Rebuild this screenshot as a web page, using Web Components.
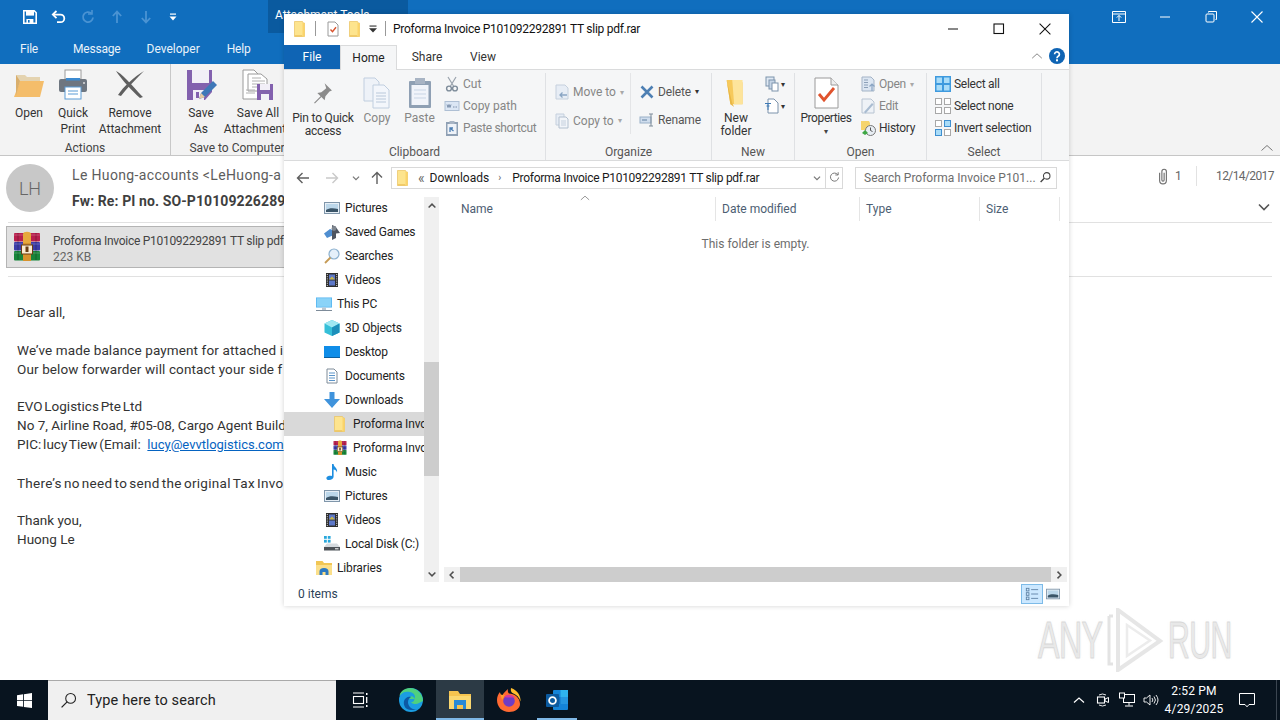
<!DOCTYPE html>
<html lang="en">
<head>
<meta charset="utf-8">
<title>Proforma Invoice</title>
<style>
  html, body { margin: 0; height: 100%; overflow: hidden; background: #fff; }
  body { display: flex; flex-direction: column; width: 1280px; height: 720px; position: relative;
         font-family: Roboto, "Noto Sans", sans-serif; font-size: 12px; color: #333; }
</style>
</head>
<body>
<outlook-window></outlook-window>
<win-taskbar></win-taskbar>
<explorer-window></explorer-window>
<any-run></any-run>

<script>
const folderY = '<path d="M2.500 .5h8l.8 1.500h1.200V15.500H2.500z" fill="#fde48e" stroke="#e9c25f" stroke-width=".7"/><path d="M10.500 2h2v13.500h-2z" fill="#fbd46a"/><path d="M2.500 15.500h8l-.5-1.200H3z" fill="#edc35c"/>';
const rar = '<rect x="3" y="2" width="26" height="8.500" rx="1" fill="#b81f4d"/><rect x="3" y="11" width="26" height="8.500" rx="1" fill="#3b3ca8"/><rect x="3" y="20" width="26" height="9.500" rx="1" fill="#17853a"/><path d="M7 2v27M25 2v27" stroke="#000" stroke-opacity=".25"/><path d="M3 4h26M3 13h26M3 22h26" stroke="#fff" stroke-opacity=".22"/><path d="M12 3c0-3 8-3 8 0v9h-8z" fill="#e7a93c"/><rect x="12" y="12" width="8" height="18" fill="#d7922c"/><rect x="10.500" y="14" width="11" height="9" fill="#f9ecd0" stroke="#6a3d12"/><rect x="14.500" y="15.500" width="3" height="5.500" fill="#6a3d12"/>';
const pic = '<rect x=".5" y="2.500" width="15" height="11" fill="#e7eff6" stroke="#8096aa"/><rect x="2" y="4" width="12" height="8" fill="#bcd7ea"/><path d="M2 10c3-2 7-2 12-1v3H2z" fill="#3b5568"/>';
const vid = '<rect x="2" y="1" width="12" height="14" fill="#2e2e2e"/><rect x="5" y="2.500" width="6" height="5" fill="#5d78c9"/><rect x="5" y="8.500" width="6" height="5" fill="#5d78c9"/><path d="M5 7.500l3-3 3 3z" fill="#c8b54a"/><path d="M3.300 2v12M12.700 2v12" stroke="#ddd" stroke-dasharray="1 1.200"/>';

// one drawing per icon: "viewBox|svg markup"
const ICONS = {
  save: '0 0 16 16|<path d="M1.800 1.800h10.400l2 2v10.400H1.800z" fill="none" stroke="#fff" stroke-width="1.600"/><rect x="4" y="2" width="8" height="4.600" fill="#fff"/><rect x="4.400" y="10" width="7" height="4" fill="#fff"/><rect x="6" y="11" width="1.600" height="2.600" fill="#106ebe"/>',
  undo: '0 0 16 16|<path d="M5.500 2L1.800 5.600l3.700 3.600" fill="none" stroke="#fff" stroke-width="1.800"/><path d="M2 5.600h7.500a3.800 3.800 0 0 1 0 7.600H6" fill="none" stroke="#fff" stroke-width="1.800"/>',
  redo: '0 0 16 16|<path d="M11.500 4.500a5 5 0 1 0 1.500 4" fill="none" stroke="#4a93d3" stroke-width="1.800"/><path d="M12 1v4H8" fill="none" stroke="#4a93d3" stroke-width="1.600"/>',
  upd: '0 0 16 16|<path d="M8 14V3M3.800 7L8 2.600 12.200 7" fill="none" stroke="#4a93d3" stroke-width="1.800"/>',
  downd: '0 0 16 16|<path d="M8 2v11M3.800 9L8 13.400 12.200 9" fill="none" stroke="#4a93d3" stroke-width="1.800"/>',
  custom: '0 0 10 10|<rect x="2" y="1.500" width="6" height="1.200" fill="#fff"/><path d="M1.500 4.500h7L5 8.500z" fill="#fff"/>',
  customd: '0 0 10 10|<rect x="1.500" y="1.500" width="7" height="1.100" fill="#333"/><path d="M1 4.200h8L5 8.500z" fill="#333"/>',
  ribbonmode: '0 0 16 16|<path d="M1.500 2.500h13v11h-13zM1.500 5h13" fill="none" stroke="#fff"/><path d="M8 12V6.500M5.800 8.600L8 6.400l2.200 2.200" fill="none" stroke="#fff"/>',
  minw: '0 0 16 16|<path d="M3 8h10" stroke="#fff"/>',
  restorew: '0 0 16 16|<path d="M5.500 3.500V2.500h8v8h-1" fill="none" stroke="#fff"/><rect x="3" y="5" width="8" height="8" rx="1" fill="none" stroke="#fff"/>',
  closew: '0 0 16 16|<path d="M2.500 2.500l11 11M13.500 2.500l-11 11" stroke="#fff" stroke-width="1.100"/>',
  open: '0 0 32 32|<path d="M3 6h9l2 2h13v6H3z" fill="#e4d3b0"/><path d="M7 12h24l-4 16H1z" fill="#f4bd6a"/><path d="M3 6v20l4-14" fill="#d9ae6c"/>',
  print: '0 0 32 32|<rect x="8" y="1" width="16" height="9" fill="#fff" stroke="#9b9b9b"/><rect x="2" y="10" width="28" height="13" rx="2" fill="#6e7680"/><rect x="8" y="18" width="16" height="12" fill="#fff" stroke="#5b9bd5"/><path d="M11 22h10M11 25h10" stroke="#5b9bd5" stroke-width="1.200"/><rect x="9" y="9" width="14" height="2.500" fill="#3d8bd1"/><circle cx="27" cy="14" r="1" fill="#ddd"/>',
  xgray: '0 0 32 32|<path d="M2 2c7 3 19 18 27 26l-3 1C18 22 8 11 2 2z" fill="#5f5f5f"/><path d="M30 2C21 7 9 18 4 26l3 1C13 19 23 9 30 2z" fill="#5f5f5f"/>',
  saveas: '0 0 32 32|<path d="M2 1h25v22l-7 8H2z" fill="#8361ae"/><rect x="7" y="1" width="17" height="13" fill="#f2eff7"/><rect x="8" y="21" width="11" height="10" fill="#f2eff7"/><rect x="11" y="23" width="3" height="6" fill="#8361ae"/><path d="M14 30l2-6 12-12 4 4-12 12z" fill="#3f78b8"/><path d="M14 30l2-6 4 4z" fill="#e7c9a1"/>',
  saveall: '0 0 32 32|<path d="M1 1h11l5 5v24H1z" fill="#fff" stroke="#9a9a9a"/><path d="M6 5h13l6 5v12H6z" fill="#fff" stroke="#9a9a9a"/><path d="M10 9h9M10 12h13M10 15h13M10 18h5M4 21h9M4 24h9" stroke="#b0b0b0"/><rect x="15" y="15" width="16" height="16" fill="#8361ae"/><rect x="18" y="15" width="10" height="6" fill="#f2eff7"/><rect x="19" y="25" width="8" height="6" fill="#f2eff7"/>',
  clip: '0 0 16 16|<path d="M5 5v7a3 3 0 0 0 6 0V4a2 2 0 0 0-4 0v7.500a1 1 0 0 0 2 0V5" fill="none" stroke="#6e6e6e" stroke-width="1"/>',
  chevd: '0 0 16 16|<path d="M3 5.500l5 5 5-5" fill="none" stroke="#555" stroke-width="1.600"/>',
  chevu: '0 0 16 16|<path d="M2.500 10.500L8 5.500l5.500 5" fill="none" stroke="#777" stroke-width="1"/>',
  rar: '0 0 32 32|' + rar,
  folder: '0 0 16 16|' + folderY,
  props: '0 0 16 16|<path d="M3 1h7l3 3v11H3z" fill="#fff" stroke="#9a9a9a"/><path d="M5.500 8.500l2 2.200 3.500-4.400" fill="none" stroke="#d9512c" stroke-width="1.400"/>',
  minb: '0 0 16 16|<path d="M3 8h10" stroke="#111" stroke-width="1"/>',
  maxb: '0 0 16 16|<rect x="3" y="3" width="9.500" height="9.500" fill="none" stroke="#111" stroke-width="1.100"/>',
  closeb: '0 0 16 16|<path d="M2.600 2.600l10.800 10.800M13.400 2.600L2.600 13.400" stroke="#111" stroke-width="1.050"/>',
  help: '0 0 16 16|<circle cx="8" cy="8" r="8" fill="#0f64b4"/><path d="M5.600 6.200a2.400 2.400 0 1 1 3.600 2.100c-.8.500-1.200.9-1.200 1.900" fill="none" stroke="#fff" stroke-width="1.700"/><rect x="7" y="11.300" width="2" height="2" fill="#fff"/>',
  pin: '0 0 32 32|<path d="M18 4l9 9-3 1-5 6-1 5-4-4-8 8-1-1 8-8-4-4 5-1 6-5z" fill="#8b8b8b"/>',
  copy: '0 0 32 32|<path d="M3 1h11l4 4v19H3z" fill="#eef2f8" stroke="#c0cedf"/><path d="M12 8h11l5 5v18H12z" fill="#f3f6fb" stroke="#c0cedf"/><path d="M15 16h10M15 19h10M15 22h10M15 25h10" stroke="#b9c8da"/>',
  paste: '0 0 32 32|<rect x="5" y="4" width="22" height="27" rx="1" fill="#8fa0b4"/><rect x="7.500" y="8" width="17" height="20" fill="#f1f4fa"/><rect x="11" y="1" width="10" height="6" fill="#a8b4c4"/><path d="M10 13h12M10 17h12M10 21h12" stroke="#c9d5e5"/>',
  cut: '0 0 16 16|<path d="M4 1l5.500 9M12 1L6.500 10" stroke="#9aa3ad" stroke-width="1.200"/><circle cx="5" cy="12.500" r="2.400" fill="none" stroke="#7d8b99" stroke-width="1.400"/><circle cx="11" cy="12.500" r="2.400" fill="none" stroke="#7d8b99" stroke-width="1.400"/>',
  copypath: '0 0 16 16|<rect x="1" y="3.500" width="14" height="9" fill="#dbe6f4" stroke="#aebfd4"/><path d="M3 6.500l1 3 1-3 1 3 1-3M9 9h1.500M11.500 9H13" fill="none" stroke="#7087a3" stroke-width=".9"/>',
  pastesc: '0 0 16 16|<rect x="2" y="2" width="12" height="14" fill="#8fa0b4"/><rect x="3.500" y="4" width="9" height="10" fill="#eef2f8"/><rect x="5.500" y="1" width="5" height="3" fill="#a8b4c4"/><path d="M6 12V8h3M6.500 8.500L9.500 11" stroke="#4b7db3" stroke-width="1.300" fill="none"/>',
  moveto: '0 0 16 16|<path d="M2 1h9l3 3v11H2z" fill="#e7edf5" stroke="#c5d0dd"/><path d="M13 11H6M8.500 8.500L6 11l2.500 2.500" fill="none" stroke="#8aa5c3" stroke-width="1.300"/>',
  copyto: '0 0 16 16|<path d="M2 1h8v11H2z" fill="#e7edf5" stroke="#c5d0dd"/><path d="M5 4h7l2 2v9H5z" fill="#f2f5f9" stroke="#b3c0cf"/><path d="M7 8h5M7 10h5M7 12h5" stroke="#c5d0dd"/>',
  del: '0 0 16 16|<path d="M2.500 2.500l11 11M13.500 2.500l-11 11" stroke="#4d7fb3" stroke-width="2.600"/>',
  rename: '0 0 16 16|<rect x="1" y="5" width="11" height="6" fill="#cfdded" stroke="#9ab0c8"/><path d="M3 8h5" stroke="#5f7f9f"/><path d="M12 2v12M10 2h4M10 14h4" stroke="#7d8b99"/>',
  newfolder: '0 0 32 32|<path d="M6 2h15l2 3v23H10z" fill="#f6c95c"/><path d="M12 2h11v26H14z" fill="#fde49b"/><path d="M6 2l4 26 4 3-2-4z" fill="#e8b645"/>',
  newitem: '0 0 16 16|<rect x="2" y="1" width="8" height="9" fill="#dfe8f3" stroke="#7d93ac"/><rect x="5" y="4" width="6" height="9" fill="#c6d5e6" stroke="#7d93ac"/><rect x="8" y="7" width="6" height="8" fill="#fff" stroke="#7d93ac"/>',
  easy: '0 0 16 16|<path d="M4 1h6l4 4v10H4z" fill="#fff" stroke="#7d93ac"/><path d="M1 5.500h6M2.500 8h3M4 5.500V12" stroke="#3e7ab5" stroke-width="1" fill="none"/>',
  propbig: '0 0 32 32|<path d="M5 1h16l7 7v23H5z" fill="#fff" stroke="#9a9a9a"/><path d="M21 1v7h7" fill="#eee" stroke="#9a9a9a"/><path d="M9 17l5 6 10-12" fill="none" stroke="#e0532d" stroke-width="2.800"/>',
  openfile: '0 0 16 16|<path d="M2 1h9l3 3v11H2z" fill="#dce6f2" stroke="#a3b3c6"/><path d="M4 4h4M4 6.500h4M4 9h4M4 11.500h4" stroke="#8ca0b8"/><path d="M12 15V8M9.500 10.500L12 8l2.500 2.500" fill="none" stroke="#8aa5c3" stroke-width="1.200"/>',
  edit: '0 0 16 16|<path d="M2 1h9l3 3v11H2z" fill="#eef2f7" stroke="#b8c4d2"/><path d="M4 14l8-9 1.500 1.500-8 9z" fill="#a9bcd1"/>',
  history: '0 0 16 16|<path d="M1 1h8l1 2v7H1z" fill="#f5d46c"/><circle cx="10.500" cy="10.500" r="5" fill="#e8eef4" stroke="#777"/><path d="M10.500 7.500v3l2 1" fill="none" stroke="#555"/><path d="M2 13l3-3 3 3-3 2z" fill="#3ea845"/>',
  selall: '0 0 16 16|<rect width="16" height="16" fill="#3e9ade"/><rect x="1.500" y="1.500" width="5.500" height="5.500" fill="#a9dcf8"/><rect x="9" y="1.500" width="5.500" height="5.500" fill="#a9dcf8"/><rect x="1.500" y="9" width="5.500" height="5.500" fill="#a9dcf8"/><rect x="9" y="9" width="5.500" height="5.500" fill="#a9dcf8"/>',
  selnone: '0 0 16 16|<g fill="#fff" stroke="#a8a8a8"><rect x=".5" y=".5" width="6" height="6"/><rect x="9.500" y=".5" width="6" height="6"/><rect x=".5" y="9.500" width="6" height="6"/><rect x="9.500" y="9.500" width="6" height="6"/></g>',
  selinv: '0 0 16 16|<g stroke="#3e8fd0"><rect x=".5" y="9.500" width="6" height="6" fill="#a9dcf8"/><rect x="9.500" y=".5" width="6" height="6" fill="#a9dcf8"/><rect x=".5" y=".5" width="6" height="6" fill="#fff" stroke="#a8a8a8"/><rect x="9.500" y="9.500" width="6" height="6" fill="#fff" stroke="#a8a8a8"/></g>',
  back: '0 0 16 16|<path d="M14 8H2.500M7.500 3L2.500 8l5 5" fill="none" stroke="#5f5f5f" stroke-width="1.400"/>',
  fwd: '0 0 16 16|<path d="M2 8h11.500M8.500 3l5 5-5 5" fill="none" stroke="#c9c9c9" stroke-width="1.400"/>',
  mini: '0 0 16 16|<path d="M4.500 6.500L8 10l3.500-3.500" fill="none" stroke="#777" stroke-width="1.400"/>',
  up: '0 0 16 16|<path d="M8 14V2.500M3 7.500l5-5 5 5" fill="none" stroke="#5f5f5f" stroke-width="1.400"/>',
  refresh: '0 0 16 16|<path d="M12 4.500A5 5 0 1 0 13 8" fill="none" stroke="#6b6b6b" stroke-width="1.100"/><path d="M12.500 1.500v3.400H9" fill="none" stroke="#6b6b6b" stroke-width="1.100"/>',
  searchg: '0 0 16 16|<circle cx="9.500" cy="6" r="4" fill="none" stroke="#444" stroke-width="1.300"/><path d="M6.500 9L2 13.500" stroke="#444" stroke-width="1.700"/>',
  scrollu: '0 0 16 16|<path d="M3.500 10L8 5.500l4.500 4.500" fill="none" stroke="#505050" stroke-width="2"/>',
  scrolld: '0 0 16 16|<path d="M3.500 6L8 10.500 12.500 6" fill="none" stroke="#505050" stroke-width="2"/>',
  scrolll: '0 0 16 16|<path d="M10 3.500L5.500 8l4.500 4.500" fill="none" stroke="#505050" stroke-width="2"/>',
  scrollr: '0 0 16 16|<path d="M6 3.500L10.500 8 6 12.500" fill="none" stroke="#505050" stroke-width="2"/>',
  pictures: '0 0 16 16|' + pic,
  games: '0 0 16 16|<path d="M0 9.500L6 5l2.500 1v5.500L3 14z" fill="#4f8ed0"/><path d="M8 1l3.500 1.500L16 9l-4 .5V14l-4 2z" fill="#4e5560"/><circle cx="10" cy="4.500" r="2.400" fill="#7f8790"/>',
  searches: '0 0 16 16|<circle cx="10" cy="6" r="5" fill="#e5f0fa" stroke="#8bb0cf" stroke-width="1.200"/><path d="M6.500 9.500L1 15" stroke="#c59b55" stroke-width="1.800"/>',
  videos: '0 0 16 16|' + vid,
  pc: '0 0 16 16|<rect x="0" y="1.500" width="16" height="10" fill="#4db0ef"/><rect x=".7" y="2.200" width="14.600" height="8.600" fill="#8ad3f8"/><rect x="0" y="14" width="16" height="1" fill="#7d8b99"/><rect x="6" y="11.500" width="4" height="2.500" fill="#bcc7d1"/>',
  objects: '0 0 16 16|<path d="M8 0l7.500 3.500v9L8 16 .5 12.500v-9z" fill="#35bfd8"/><path d="M8 7.500L.5 3.500 8 0l7.500 3.500z" fill="#9fe8f2"/><path d="M8 7.500V16l7.500-3.500v-9z" fill="#1c8fba"/>',
  desktop: '0 0 16 16|<rect x="0" y="2" width="16" height="11.500" fill="#0f8de8"/><rect x="0" y="13" width="16" height="1" fill="#0b5e9e"/>',
  docs: '0 0 16 16|<path d="M3 1h7l3 3v11H3z" fill="#fff" stroke="#7f8c99"/><path d="M5 5h6M5 7.500h6M5 10h6M5 12.500h6" stroke="#5a94c9"/>',
  downloads: '0 0 16 16|<path d="M5.500 0h5v7H16l-8 9-8-9h5.500z" fill="#3f93dc"/>',
  music: '0 0 16 16|<path d="M8 0h1.600c.3 3.500 4.400 3.800 3.400 8.500-.5-1.800-2-2.700-3.400-2.900V12.500c0 2-2 3.500-4.600 3.500-2 0-3-1.200-2.500-2.600C3 12 6 11.400 8 12z" fill="#1e8ee0"/>',
  disk: '0 0 16 16|<rect x="0" y="0" width="2.800" height="2.800" fill="#2aa8dc"/><rect x="3.800" y="0" width="2.800" height="2.800" fill="#2aa8dc"/><rect x="0" y="3.800" width="2.800" height="2.800" fill="#2aa8dc"/><rect x="3.800" y="3.800" width="2.800" height="2.800" fill="#2aa8dc"/><path d="M3 7.500h10l3 3.500H0z" fill="#d5dadf"/><rect x="0" y="11" width="16" height="3.500" fill="#4d5258"/><rect x="11" y="12.300" width="3.500" height="1" fill="#fff"/>',
  libs: '0 0 16 16|<path d="M0 1h6.500L8 3h8v12H0z" fill="#f1c654"/><path d="M0 5h16v10H0z" fill="#fbdf8a"/><path d="M3.500 15v-3.500a4.500 3.500 0 0 1 9 0V15h-3v-3h-3v3z" fill="#2b79c2"/>',
  vdetails: '0 0 16 16|<g fill="none" stroke="#5b7fa3"><rect x="1.500" y="1.500" width="3" height="3"/><rect x="1.500" y="6.500" width="3" height="3"/><rect x="1.500" y="11.500" width="3" height="3"/><path d="M7 3h8M7 8h8M7 13h8"/></g>',
  windows: '0 0 16 16|<path d="M0 2.300l6.500-.9v6.200H0zM7.400 1.300L16 0v7.600H7.400zM0 8.500h6.500v6.200L0 13.800zM7.400 8.500H16V16l-8.600-1.200z" fill="#fff"/>',
  tsearch: '0 0 16 16|<circle cx="10" cy="6" r="4.600" fill="none" stroke="#222" stroke-width="1"/><path d="M6.700 9.300L1.500 14.500" stroke="#222" stroke-width="1.200"/>',
  taskview: '0 0 16 16|<path d="M1 1h11M1 15h11" stroke="#fff" stroke-width="1.100"/><rect x="1.500" y="4.500" width="10" height="7" fill="none" stroke="#fff" stroke-width="1.100"/><rect x="14" y="1" width="1.500" height="2" fill="#fff"/><path d="M14.700 5v6" stroke="#fff" stroke-width="1.300"/><rect x="14" y="13" width="1.500" height="2" fill="#fff"/>',
  edge: '0 0 24 24|<circle cx="12" cy="12" r="12" fill="#1b9de2"/><path d="M24 13C24 6 18 0 11 0 5 0 1 4 .5 8 3 4 7 3 11 4c5 1 6 5 4 7h-5c0-3 4-4 5-1 1 2 0 4-3 4.500 3 2 6 2 8 .5z" fill="#4fd07f"/><path d="M12 22c-5 0-8-4-7-9 1-3 4-5 7-4-4 2-4 8 0 11 2 1.500 5 2 8 .5-2 1-5 1.500-8 1.500z" fill="#0c59a4"/>',
  explorer: '0 0 24 24|<path d="M1 3h9l2 3h11v15H1z" fill="#f6c44f"/><rect x="1" y="8" width="22" height="13" fill="#fbd870"/><path d="M6 12h12v9h-3v-3H9v3H6z" fill="#2a8ad4"/><rect x="9" y="17" width="6" height="4" fill="#f6c44f"/>',
  firefox: '0 0 24 24|<path d="M12 24C5 24 0 19 0 12c0-3 1-6 3-8 0 2 1 3 2 4 1-3 4-5 6-7-.5 2 0 3.500 1 4.500 5 0 11 4 11 10.500 0 4.500-5 8-11 8z" fill="#ff6a32"/><path d="M14 0c-.5 2.500 0 4 1.500 5 4 1.500 7 4.500 8 8.500.5-5-2.500-11-9.500-13.500z" fill="#ffbd2e"/><path d="M3 5c1 2 3 2.500 5 2L5 12z" fill="#ffa02e"/><circle cx="12" cy="13" r="5.800" fill="#6f3cc4"/><path d="M7 9c3-3 8-3 11 1-4-1-7 0-11-1z" fill="#d6379f"/>',
  outlook: '0 0 24 24|<rect x="8" y="2" width="15" height="20" rx="1" fill="#1484d8"/><rect x="15.500" y="2" width="7.500" height="7" fill="#2fb4ee"/><rect x="8" y="9" width="7.500" height="7" fill="#0f6cbd"/><rect x="15.500" y="9" width="7.500" height="7" fill="#2596e0"/><rect x="1" y="6" width="13" height="13" rx="1" fill="#0b5a9f"/><circle cx="7.500" cy="12.500" r="3.400" fill="none" stroke="#fff" stroke-width="1.800"/>',
  caret: '0 0 16 16|<path d="M3 10.500L8 6l5 4.500" fill="none" stroke="#fff" stroke-width="1.200"/>',
  meet: '0 0 16 16|<path d="M4 3a7 7 0 0 1 7 0M4 13a7 7 0 0 0 7 0" fill="none" stroke="#fff" stroke-width=".9"/><rect x="2.500" y="5" width="7" height="6" fill="none" stroke="#fff" stroke-width="1.100"/><path d="M10 7l3.500-1.500v5L10 9z" fill="none" stroke="#fff" stroke-width="1"/>',
  net: '0 0 16 16|<rect x="4.500" y="2.500" width="11" height="8" fill="none" stroke="#fff"/><rect x=".5" y="1" width="5" height="5" fill="#08141f" stroke="#fff"/><path d="M10 10.500v3M6 14h8" stroke="#fff"/>',
  sound: '0 0 16 16|<path d="M1 6h2.500L7 3v10L3.500 10H1z" fill="none" stroke="#fff" stroke-width=".9"/><path d="M9 6a3 3 0 0 1 0 4M11 4.500a5.500 5.500 0 0 1 0 7M13 3a8 8 0 0 1 0 10" fill="none" stroke="#fff" stroke-width=".9"/>',
  notif: '0 0 16 16|<path d="M.5 1.500h15v11H10L8 14.800 6 12.500H.5z" fill="none" stroke="#fff" stroke-width="1"/>',
  logo: '0 0 60 64|<path d="M5 8v48h4M5 8h4" fill="none" stroke="#e3e3e3" stroke-width="3"/><path d="M14 2v60L56 33z" fill="none" stroke="#e6e6e6" stroke-width="4"/><path d="M23 17v31l23-15.500z" fill="none" stroke="#ececec" stroke-width="2.500"/>'
};

// <ui-icon name size>: inline svg out of the table above
class UiIcon extends HTMLElement {
  connectedCallback() {
    const [vb, body] = (ICONS[this.getAttribute('name')] || '0 0 16 16|').split('|');
    const w = this.getAttribute('size') || 16;
    const h = this.getAttribute('h') || w;
    this.attachShadow({ mode: 'open' }).innerHTML = `
      <style>:host { display: inline-flex; flex: none; line-height: 0; }</style>
      <svg width="${w}" height="${h}" viewBox="${vb}">${body}</svg>`;
  }
}
customElements.define('ui-icon', UiIcon);

// big ribbon button: icon on top, label under it
class RibbonBig extends HTMLElement {
  connectedCallback() {
    const w = this.getAttribute('w'), icon = this.getAttribute('icon');
    const size = this.getAttribute('size') || 32, lh = this.getAttribute('lh') || 13;
    const top = this.getAttribute('top') || 39;
    this.attachShadow({ mode: 'open' }).innerHTML = `
      <style>
        :host { display: flex; flex-direction: column; align-items: center; flex: none; width: ${w}px;
                text-align: center; line-height: ${lh}px; }
        .i { height: ${top}px; flex: none; display: flex; align-items: center; justify-content: center; }
      </style>
      <div class="i"><ui-icon name="${icon}" size="${size}"></ui-icon></div>
      <slot></slot>`;
  }
}
customElements.define('ribbon-big', RibbonBig);

// small ribbon row: 16px icon then label
class RibbonSmall extends HTMLElement {
  connectedCallback() {
    const h = this.getAttribute('h') || 22;
    const drop = this.getAttribute('drop');
    this.attachShadow({ mode: 'open' }).innerHTML = `
      <style>
        :host { display: flex; align-items: center; gap: 3px; height: ${h}px; white-space: nowrap; }
        .c { font-size: 8px; color: ${drop === 'dark' ? '#333' : '#a8a8a8'}; margin-left: 1px; }
        .c.t { margin-left: -2px; }
      </style>
      <ui-icon name="${this.getAttribute('icon')}" size="16"></ui-icon>
      <slot></slot>${drop !== null ? `<span class="c ${this.textContent.trim() ? '' : 't'}">▾</span>` : ''}`;
  }
}
customElements.define('ribbon-small', RibbonSmall);

// a ribbon group: content on top, caption at the bottom, separator on the right
class RibbonGroup extends HTMLElement {
  connectedCallback() {
    const w = this.getAttribute('w');
    this.attachShadow({ mode: 'open' }).innerHTML = `
      <style>
        :host { display: flex; flex-direction: column; flex: none; width: ${w}px; height: 100%;
                box-sizing: border-box; border-right: 1px solid var(--sep, #dfe1e4); }
        .c { flex: 1; display: flex; min-height: 0; }
        .l { height: var(--cap-h, 15px); line-height: 15px; text-align: center; color: var(--cap, #555);
             margin-right: var(--capr, 0); white-space: nowrap; }
      </style>
      <div class="c"><slot></slot></div>
      <div class="l">${this.getAttribute('label')}</div>`;
  }
}
customElements.define('ribbon-group', RibbonGroup);

class NavRow extends HTMLElement {
  connectedCallback() {
    const lvl = +this.getAttribute('lvl');
    this.attachShadow({ mode: 'open' }).innerHTML = `
      <style>
        :host { display: flex; align-items: center; gap: 5px; height: 24px; flex: none; white-space: nowrap;
                padding-left: ${lvl}px; color: #222; overflow: hidden; letter-spacing: -.15px; }
        :host([sel]) { background: #d9d9d9; }
      </style>
      <ui-icon name="${this.getAttribute('icon')}" size="16"></ui-icon>
      <slot></slot>`;
  }
}
customElements.define('nav-row', NavRow);

class OutlookWindow extends HTMLElement {
  constructor() {
    super();
    this.attachShadow({ mode: 'open' }).innerHTML = `
      <style>
        :host { display: flex; flex-direction: column; height: 680px; flex: none; position: relative; overflow: hidden; }
        .top { background: #106ebe; height: 64px; flex: none; color: #fff; display: flex; flex-direction: column; position: relative; }
        .qat { height: 33px; display: flex; align-items: center; }
        .qbtn { width: 29px; display: flex; justify-content: center; }
        .tool { background: #0a5a9f; height: 33px; width: 140px; padding-left: 7px;
                box-sizing: border-box; line-height: 30px; white-space: nowrap; }
        .ctl { margin-left: auto; display: flex; }
        .ctl div { width: 46px; display: flex; justify-content: center; }
        .tabs { height: 31px; display: flex; align-items: center; letter-spacing: -.2px; color: #e9f2fa; }
        .tabs span:nth-child(1) { margin-left: 20px; }
        .tabs span:nth-child(2) { margin-left: 35px; }
        .tabs span:nth-child(3) { margin-left: 26px; letter-spacing: 0; }
        .tabs span:nth-child(4) { margin-left: 27px; }
        .ribbon { height: 92px; flex: none; box-sizing: border-box; background: #f3f3f3; border-bottom: 1px solid #c6c6c6;
                  display: flex; padding-left: 6px; position: relative; --sep: #c8c8c8; --cap: #444; --cap-h: 14px; }
        .ribbon ribbon-big { padding-top: 1px; }
        .collapse { position: absolute; right: 5px; bottom: -1px; }
        .sep { margin-left: 10px; }
        .hdr { display: flex; height: 66px; flex: none; }
        .av { width: 48px; height: 48px; border-radius: 50%; background: #c8c8c8; margin: 8px 18px 0 6px; flex: none;
              display: flex; align-items: center; justify-content: center; font-size: 18px; color: #666; font-weight: 300; }
        .who { flex: 1; padding-top: 9px; white-space: nowrap; }
        .sender { font-size: 14px; line-height: 20px; color: #5d5d5d; letter-spacing: .35px; }
        .subject { font-size: 14px; line-height: 20px; font-weight: 700; color: #3f3f3f; margin-top: 6px; letter-spacing: .1px; }
        .meta { width: 126px; padding: 10px 8px 0 0; box-sizing: border-box; color: #666; flex: none; }
        .m1 { display: flex; align-items: center; height: 20px; }
        .m1 .n { margin-left: 3px; width: 7px; flex: none; }
        .m1 .d { border-left: 1px solid #e2e2e2; height: 20px; margin: 0 19px 0 14px; flex: none; }
        .m1 .date { white-space: nowrap; letter-spacing: -.6px; }
        .m2 { display: flex; justify-content: flex-end; margin-top: 13px; }
        .rule { height: 1px; background: #e1e1e1; margin: 0 8px; flex: none; }
        .att { height: 53px; flex: none; padding: 3px 0 0 6px; box-sizing: border-box; }
        .chip { width: 400px; height: 42px; box-sizing: border-box; background: #e1e1e1; border: 1px solid #b4b4b4;
                display: flex; align-items: center; padding-left: 4px; gap: 10px; }
        .chip div { line-height: 16px; color: #444; white-space: nowrap; padding-top: 3px; letter-spacing: -.28px; }
        .chip small { font-size: 12px; color: #666; display: block; letter-spacing: 0; }
        .body { padding: 26px 0 0 17px; font-size: 13.5px; line-height: 18.85px; color: #333; white-space: nowrap; }
        .wide { letter-spacing: .12px; }
        .tight { word-spacing: -1.500px; }
        .tax { word-spacing: -1.500px; letter-spacing: .3px; }
        a { color: #0563c1; word-spacing: 0; font-size: 13px; margin-left: 3px; }
      </style>
      <div class="top">
        <div class="qat">
          <div class="qbtn" style="margin-left:15px"><ui-icon name="save"></ui-icon></div>
          <div class="qbtn"><ui-icon name="undo"></ui-icon></div>
          <div class="qbtn"><ui-icon name="redo"></ui-icon></div>
          <div class="qbtn"><ui-icon name="upd"></ui-icon></div>
          <div class="qbtn"><ui-icon name="downd"></ui-icon></div>
          <div class="qbtn" style="margin-left:-2px"><ui-icon name="custom" size="10"></ui-icon></div>
          <div class="tool" style="margin-left:81px">Attachment Tools</div>
          <div class="ctl">
            <div><ui-icon name="ribbonmode"></ui-icon></div>
            <div><ui-icon name="minw"></ui-icon></div>
            <div><ui-icon name="restorew"></ui-icon></div>
            <div><ui-icon name="closew"></ui-icon></div>
          </div>
        </div>
        <div class="tabs"><span>File</span><span>Message</span><span>Developer</span><span>Help</span></div>
      </div>
      <div class="ribbon">
        <ribbon-group w="165" label="Actions" style="--capr:6px">
          <ribbon-big w="46" icon="open" lh="16" top="40">Open</ribbon-big>
          <ribbon-big w="42" icon="print" lh="16" top="40">Quick Print</ribbon-big>
          <ribbon-big w="72" icon="xgray" lh="16" top="40">Remove Attachment</ribbon-big>
        </ribbon-group>
        <ribbon-group class="sep" w="112" label="Save to Computer" style="border:0">
          <ribbon-big w="40" icon="saveas" lh="16" top="40">Save As</ribbon-big>
          <ribbon-big w="74" icon="saveall" lh="16" top="40">Save All Attachments</ribbon-big>
        </ribbon-group>
        <ui-icon class="collapse" name="chevu" size="16"></ui-icon>
      </div>
      <div class="hdr">
        <div class="av">LH</div>
        <div class="who">
          <div class="sender">Le Huong-accounts &lt;LeHuong-a</div>
          <div class="subject">Fw: Re: PI no. SO-P10109226289</div>
        </div>
        <div class="meta">
          <div class="m1"><ui-icon name="clip" size="18"></ui-icon><span class="n">1</span><span class="d"></span><span class="date">12/14/2017</span></div>
          <div class="m2"><ui-icon name="chevd"></ui-icon></div>
        </div>
      </div>
      <div class="rule"></div>
      <div class="att">
        <div class="chip"><ui-icon name="rar" size="32"></ui-icon><div>Proforma Invoice P101092292891 TT slip pdf<small>223 KB</small></div></div>
      </div>
      <div class="rule"></div>
      <div class="body">
        Dear all,<br><br>
        <span class="wide">We’ve made balance payment for attached i</span><br>
        <span class="wide">Our below forwarder will contact your side f</span><br><br>
        <span class="tight">EVO Logistics Pte Ltd</span><br>
        No 7, Airline Road, #05-08, Cargo Agent Build<br>
        <span class="tight">PIC: lucy Tiew (Email: &nbsp;</span><a href="#">lucy@evvtlogistics.com</a><br><br>
        <span class="tax">There’s no need to send the original Tax Invo</span><br><br>
        Thank you,<br>
        Huong Le
      </div>`;
  }
}
customElements.define('outlook-window', OutlookWindow);

class ExplorerWindow extends HTMLElement {
  constructor() {
    super();
    this.attachShadow({ mode: 'open' }).innerHTML = `
      <style>
        /* floating window on the desktop, so it keeps its own place */
        :host { position: absolute; left: 284px; top: 14px; width: 785px; height: 592px; background: #fff;
                display: flex; flex-direction: column; box-shadow: 0 0 5px rgba(0,0,0,.18); color: #333; }
        .title { height: 29px; flex: none; display: flex; align-items: center; padding-left: 8px; color: #111; }
        .title .v { width: 1px; height: 15px; background: #999; }
        .long { letter-spacing: -.28px; }
        .ctl { margin-left: auto; display: flex; padding-right: 1px; }
        .ctl div { width: 46px; display: flex; justify-content: center; }
        .tabs { height: 26px; flex: none; display: flex; box-sizing: border-box; position: relative; top: 1px; z-index: 1; }
        .tabs div { line-height: 25px; text-align: center; height: 24px; box-sizing: border-box; margin-top: 1px; }
        .tfile { width: 56px; background: #0f64b4; color: #fff; }
        .thome { width: 57px; background: #f5f6f7; border: 1px solid #dadbdc; border-bottom: 0; height: 25px !important; color: #222; }
        .tshare { width: 60px; color: #333; }
        .tview { width: 52px; color: #333; }
        .tright { margin-left: auto; display: flex; align-items: center; gap: 5px; padding: 0 4px 2px 0; line-height: 0 !important; }
        .ribbon { height: 92px; flex: none; box-sizing: border-box; background: #f5f6f7; border-top: 1px solid #dadbdc;
                  border-bottom: 1px solid #dadbdc; display: flex; padding-top: 3px; }
        .dim { color: #868686; }
        .small { display: flex; flex-direction: column; }
        .org { padding: 5px 0 0 8px; display: flex; }
        .addr { height: 36px; flex: none; display: flex; align-items: center; padding-bottom: 3px; box-sizing: border-box; }
        .nv { display: flex; align-items: center; width: 107px; flex: none; padding-left: 11px; box-sizing: border-box; }
        .path { width: 435px; height: 22px; flex: none; box-sizing: border-box; border: 1px solid #d9d9d9; display: flex; align-items: center;
                padding-left: 3px; color: #1a1a1a; white-space: nowrap; }
        .refresh { width: 17px; height: 22px; box-sizing: border-box; border: 1px solid #d9d9d9; border-left: 0; display: flex; align-items: center; justify-content: center; flex: none; }
        .search { width: 202px; height: 22px; flex: none; box-sizing: border-box; border: 1px solid #d9d9d9; margin-left: 12px; display: flex; align-items: center;
                  padding: 0 4px 0 8px; color: #6d6d6d; white-space: nowrap; justify-content: space-between; }
        .main { flex: 1; display: flex; min-height: 0; }
        .nav { width: 140px; flex: none; overflow: hidden; display: flex; flex-direction: column; }
        .nav-in { margin-top: -1px; display: flex; flex-direction: column; }
        .vs { width: 15px; flex: none; background: #f0f0f0; display: flex; flex-direction: column; align-items: center; }
        .vs .ar { height: 17px; display: flex; align-items: center; }
        .vs .sp { flex: 1; width: 100%; display: flex; flex-direction: column; }
        .vs .th { height: 114px; margin-top: 148px; background: #cdcdcd; }
        .list { flex: 1; display: flex; flex-direction: column; min-width: 0; }
        .cols { display: flex; height: 24px; flex: none; position: relative; color: #4d5e73; }
        .cols div { box-sizing: border-box; border-right: 1px solid #e5e5e5; padding-left: 6px; line-height: 24px; flex: none; }
        .sort { position: absolute; left: 140px; top: -5px; }
        .empty { flex: 1; text-align: center; margin: 16px 2px 0 5px; color: #6d6d6d; }
        .hs { height: 15px; flex: none; margin: 0 2px 0 5px; background: #f0f0f0; display: flex; align-items: center; }
        .hs .th { flex: 1; height: 100%; background: #cdcdcd; }
        .hs .ar { width: 16px; display: flex; justify-content: center; }
        .status { height: 24px; flex: none; display: flex; align-items: center; padding-left: 14px; color: #2b3f58; }
        .views { margin-left: auto; display: flex; padding-right: 8px; align-items: center; gap: 2px; }
        .vbtn { width: 16px; height: 20px; box-sizing: border-box; display: flex; align-items: center; justify-content: center; }
        .vbtn.on { width: 22px; background: #cce8ff; border: 1px solid #7dbbe8; }
      </style>
      <div class="title">
        <ui-icon name="folder" size="16"></ui-icon><span class="v" style="margin:0 9px 0 7px"></span>
        <ui-icon name="props" size="16"></ui-icon>
        <ui-icon name="folder" size="16" style="margin-left:6px"></ui-icon>
        <ui-icon name="customd" size="10" style="margin-left:5px"></ui-icon><span class="v" style="margin:0 7px"></span>
        <span class="long">Proforma Invoice P101092292891 TT slip pdf.rar</span>
        <div class="ctl">
          <div><ui-icon name="minb"></ui-icon></div>
          <div><ui-icon name="maxb"></ui-icon></div>
          <div><ui-icon name="closeb"></ui-icon></div>
        </div>
      </div>
      <div class="tabs">
        <div class="tfile">File</div><div class="thome">Home</div><div class="tshare">Share</div><div class="tview">View</div>
        <div class="tright"><ui-icon name="chevu" size="14"></ui-icon><ui-icon name="help" size="16"></ui-icon></div>
      </div>
      <div class="ribbon">
        <ribbon-group w="262" label="Clipboard">
          <ribbon-big w="72" icon="pin" size="26" style="margin-left:3px;letter-spacing:-.2px">Pin to Quick access</ribbon-big>
          <ribbon-big w="36" icon="copy" class="dim">Copy</ribbon-big>
          <ribbon-big w="47" icon="paste" class="dim" style="margin-left:1px">Paste</ribbon-big>
          <div class="small dim" style="margin-left:1px">
            <ribbon-small icon="cut">Cut</ribbon-small>
            <ribbon-small icon="copypath">Copy path</ribbon-small>
            <ribbon-small icon="pastesc" style="letter-spacing:-.35px">Paste shortcut</ribbon-small>
          </div>
        </ribbon-group>
        <ribbon-group w="166" label="Organize">
          <div class="small org dim">
            <ribbon-small icon="moveto" h="28" drop>Move to</ribbon-small>
            <ribbon-small icon="copyto" h="29" drop>Copy to</ribbon-small>
          </div>
          <div class="small org" style="margin-left:6px;padding-left:8px;border-left:1px solid #e4e5e7;color:#555;height:56px;letter-spacing:-.15px">
            <ribbon-small icon="del" h="28" drop="dark">Delete</ribbon-small>
            <ribbon-small icon="rename" h="30">Rename</ribbon-small>
          </div>
        </ribbon-group>
        <ribbon-group w="83" label="New">
          <ribbon-big w="46" icon="newfolder" size="30" style="margin-left:1px">New folder</ribbon-big>
          <div class="small" style="padding-left:5px">
            <ribbon-small icon="newitem" drop="dark"></ribbon-small>
            <ribbon-small icon="easy" drop="dark"></ribbon-small>
          </div>
        </ribbon-group>
        <ribbon-group w="132" label="Open">
          <ribbon-big w="62" icon="propbig" style="letter-spacing:-.4px">Properties<span style="font-size:8px;display:block;color:#444">▾</span></ribbon-big>
          <div class="small" style="padding-left:3px;letter-spacing:-.3px">
            <ribbon-small icon="openfile" class="dim" drop>Open</ribbon-small>
            <ribbon-small icon="edit" class="dim">Edit</ribbon-small>
            <ribbon-small icon="history">History</ribbon-small>
          </div>
        </ribbon-group>
        <ribbon-group w="115" label="Select">
          <div class="small" style="padding-left:8px;letter-spacing:-.27px">
            <ribbon-small icon="selall">Select all</ribbon-small>
            <ribbon-small icon="selnone">Select none</ribbon-small>
            <ribbon-small icon="selinv">Invert selection</ribbon-small>
          </div>
        </ribbon-group>
      </div>
      <div class="addr">
        <div class="nv">
          <ui-icon name="back"></ui-icon><ui-icon name="fwd" style="margin-left:13px"></ui-icon>
          <ui-icon name="mini" size="14" style="margin-left:9px"></ui-icon><ui-icon name="up" style="margin-left:6px"></ui-icon>
        </div>
        <div class="path">
          <ui-icon name="folder" size="16"></ui-icon>
          <span style="margin-left:7px;color:#666;font-size:14px;line-height:12px">«</span><span style="margin-left:5px">Downloads</span>
          <span style="margin:0 11px 0 9px;color:#666;font-size:10px">›</span><span class="long">Proforma Invoice P101092292891 TT slip pdf.rar</span>
          <ui-icon name="mini" size="14" style="margin-left:auto;margin-right:1px"></ui-icon>
        </div>
        <div class="refresh"><ui-icon name="refresh" size="13"></ui-icon></div>
        <div class="search"><span>Search Proforma Invoice P101...</span><ui-icon name="searchg" size="13"></ui-icon></div>
      </div>
      <div class="main">
        <div class="nav"><div class="nav-in">
          <nav-row lvl="40" icon="pictures">Pictures</nav-row>
          <nav-row lvl="40" icon="games" style="letter-spacing:-.27px">Saved Games</nav-row>
          <nav-row lvl="40" icon="searches">Searches</nav-row>
          <nav-row lvl="40" icon="videos">Videos</nav-row>
          <nav-row lvl="32" icon="pc">This PC</nav-row>
          <nav-row lvl="40" icon="objects">3D Objects</nav-row>
          <nav-row lvl="40" icon="desktop">Desktop</nav-row>
          <nav-row lvl="40" icon="docs">Documents</nav-row>
          <nav-row lvl="40" icon="downloads">Downloads</nav-row>
          <nav-row lvl="48" icon="folder" sel>Proforma Invoice P101092292891 TT slip pdf.rar</nav-row>
          <nav-row lvl="48" icon="rar">Proforma Invoice P101092292891 TT slip pdf.rar</nav-row>
          <nav-row lvl="40" icon="music">Music</nav-row>
          <nav-row lvl="40" icon="pictures">Pictures</nav-row>
          <nav-row lvl="40" icon="videos">Videos</nav-row>
          <nav-row lvl="40" icon="disk" style="letter-spacing:-.2px">Local Disk (C:)</nav-row>
          <nav-row lvl="32" icon="libs">Libraries</nav-row>
        </div></div>
        <div class="vs">
          <div class="ar"><ui-icon name="scrollu" size="12"></ui-icon></div>
          <div class="sp"><div class="th"></div></div>
          <div class="ar"><ui-icon name="scrolld" size="12"></ui-icon></div>
        </div>
        <div class="list">
          <div class="cols">
            <div style="width:277px;padding-left:22px">Name</div>
            <div style="width:144px">Date modified</div>
            <div style="width:120px">Type</div>
            <div style="width:80px">Size</div>
            <ui-icon class="sort" name="chevu" size="12"></ui-icon>
          </div>
          <div class="empty">This folder is empty.</div>
          <div class="hs">
            <div class="ar"><ui-icon name="scrolll" size="12"></ui-icon></div>
            <div class="th"></div>
            <div class="ar"><ui-icon name="scrollr" size="12"></ui-icon></div>
          </div>
        </div>
      </div>
      <div class="status">
        <span>0 items</span>
        <div class="views">
          <div class="vbtn on"><ui-icon name="vdetails" size="14"></ui-icon></div>
          <div class="vbtn"><ui-icon name="pictures" size="14"></ui-icon></div>
        </div>
      </div>`;
  }
}
customElements.define('explorer-window', ExplorerWindow);

class WinTaskbar extends HTMLElement {
  constructor() {
    super();
    this.attachShadow({ mode: 'open' }).innerHTML = `
      <style>
        :host { display: flex; height: 40px; flex: none; background: #08141f; color: #fff; align-items: stretch; }
        .start { width: 48px; display: flex; align-items: center; justify-content: center; flex: none; }
        .search { width: 288px; background: #f0f0f0; border-top: 1px solid #a9a9a9; box-sizing: border-box; display: flex;
                  align-items: center; color: #222; font-size: 14.500px; padding-left: 12px; gap: 10px; flex: none; letter-spacing: .15px; }
        .app { width: 48px; display: flex; align-items: center; justify-content: center; box-sizing: border-box; flex: none; }
        .app.run { background: linear-gradient(#7fb8e6, #7fb8e6) center bottom / 40px 2px no-repeat; }
        .app.act { background: linear-gradient(#7fb8e6, #7fb8e6) bottom / 100% 2px no-repeat, #2c3a45; }
        .tray { margin-left: auto; display: flex; align-items: center; align-self: stretch; }
        .tray .t { width: 24px; display: flex; justify-content: center; }
        .clock { width: 62px; text-align: center; font-size: 12px; line-height: 18px; white-space: nowrap; letter-spacing: .2px; display: flex; justify-content: center; }
        .notif { width: 44px; display: flex; justify-content: center; align-items: center; }
        .edge { width: 1px; align-self: stretch; background: #3b4651; margin: 0 3px 0 7px; }
      </style>
      <div class="start"><ui-icon name="windows" size="15"></ui-icon></div>
      <div class="search"><ui-icon name="tsearch" size="17"></ui-icon><span>Type here to search</span></div>
      <div class="app"><ui-icon name="taskview" size="16"></ui-icon></div>
      <div class="app" style="margin-left:3px"><ui-icon name="edge" size="24"></ui-icon></div>
      <div class="app run act" style="margin-left:1px"><ui-icon name="explorer" size="24"></ui-icon></div>
      <div class="app" style="margin-left:1px"><ui-icon name="firefox" size="24"></ui-icon></div>
      <div class="app run"><ui-icon name="outlook" size="24"></ui-icon></div>
      <div class="tray">
        <div class="t"><ui-icon name="caret"></ui-icon></div>
        <div class="t"><ui-icon name="meet"></ui-icon></div>
        <div class="t"><ui-icon name="net"></ui-icon></div>
        <div class="t"><ui-icon name="sound"></ui-icon></div>
        <div class="clock"><div>2:52 PM<br>4/29/2025</div></div>
        <div class="notif"><ui-icon name="notif"></ui-icon></div>
        <div class="edge"></div>
      </div>`;
  }
}
customElements.define('win-taskbar', WinTaskbar);

// faint watermark over the page
class AnyRun extends HTMLElement {
  constructor() {
    super();
    this.attachShadow({ mode: 'open' }).innerHTML = `
      <style>
        :host { position: absolute; left: 1038px; top: 608px; display: flex; align-items: center; gap: 4px; pointer-events: none;
                font: 400 52px "Liberation Sans", sans-serif; color: rgba(225,225,225,.3); letter-spacing: -1px;
                -webkit-text-stroke: 1px rgba(195,195,195,.55); text-shadow: 0 0 3px rgba(200,200,200,.4); }
        span { display: inline-block; transform: scaleX(.62); transform-origin: left center; }
        .a { width: 62px; }
        .b { width: 66px; transform: scaleX(.58); }
      </style>
      <span class="a">ANY</span><ui-icon name="logo" size="60" h="64"></ui-icon><span class="b">RUN</span>`;
  }
}
customElements.define('any-run', AnyRun);
</script>
</body>
</html>
